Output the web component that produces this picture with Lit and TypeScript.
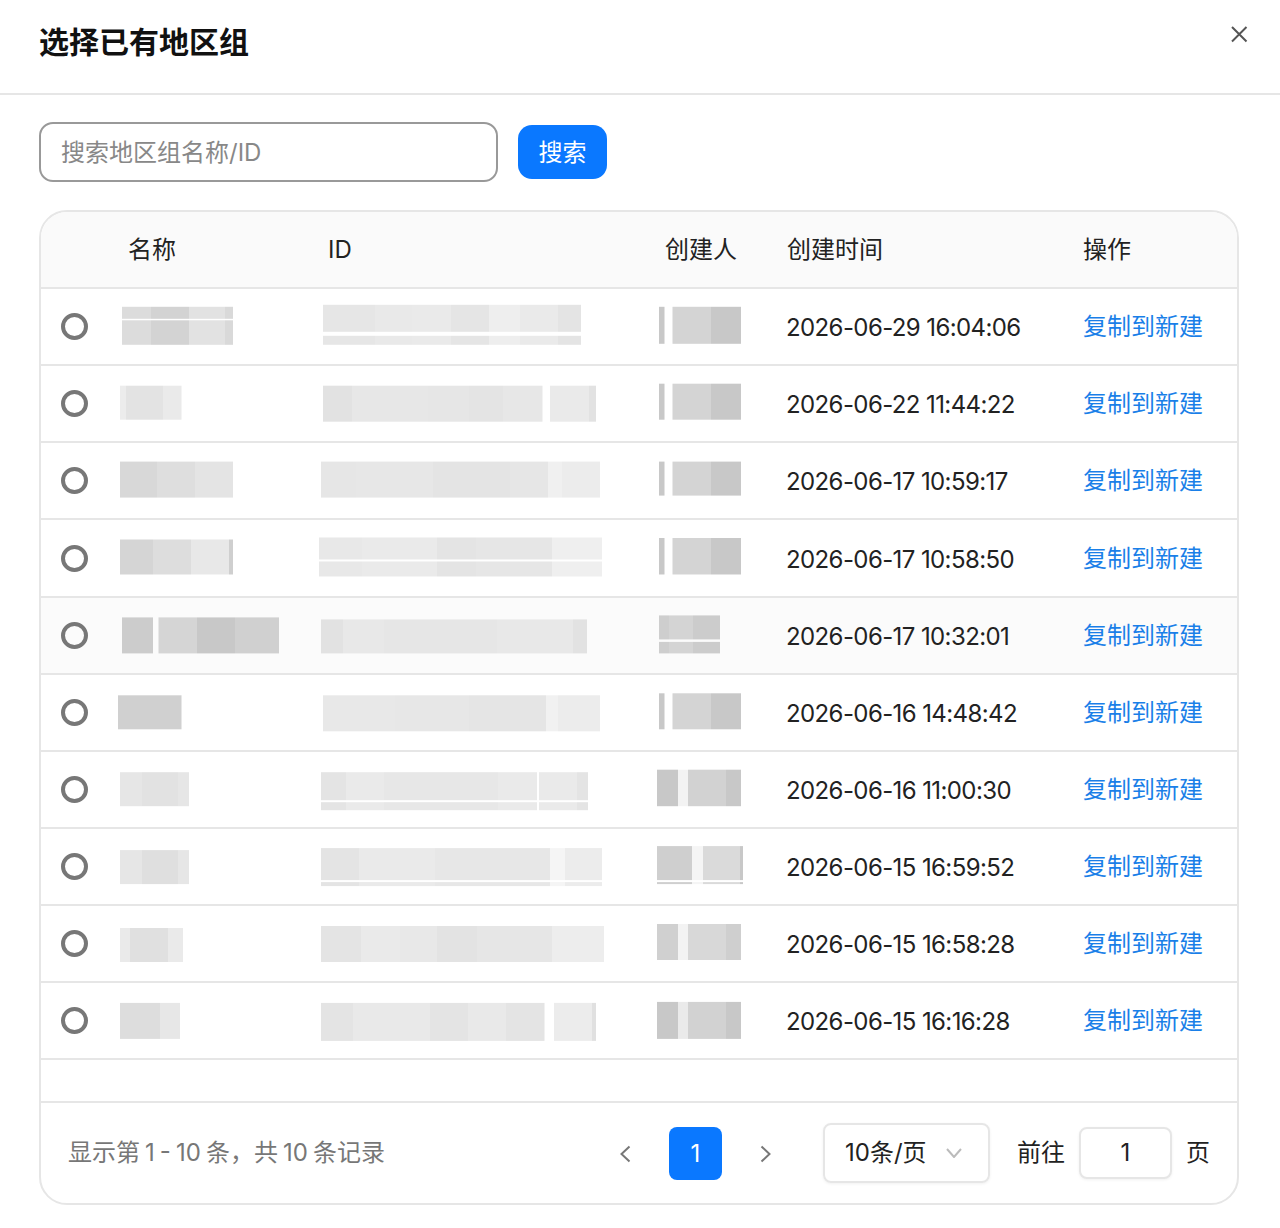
import { LitElement, html, css, svg } from 'lit';
import { customElement } from 'lit/decorators.js';

type Seg = [number, string]; // segment end x, grey
interface Block {
  x: number;
  // vertical bands of the redaction, in page y
  bands: [number, number][];
  segs: Seg[];
}

const ROW_TOP = 289.2;
const ROW_H = 77.1;

const g = (v: string) => `#${v}${v}${v}`;
const b = (x: number, bands: [number, number][], segs: [number, string][]): Block => ({
  x,
  bands,
  segs: segs.map(([e, c]) => [e, c === '' ? '' : g(c)] as Seg),
});

// bar + two-tone block used by most creator cells
const creatorA = (y0: number, y1: number) =>
  b(659, [[y0, y1]], [[664.5, 'c8'], [672.5, ''], [711, 'd4'], [741, 'c8']]);

const rows = [
  {
    time: '2026-06-29 16:04:06',
    name: b(122, [[307, 319], [320.5, 345]], [[151, 'dc'], [189, 'd3'], [225, 'e2'], [233, 'd9']]),
    id: b(323, [[305, 332], [336, 345]], [[375, 'e6'], [412, 'e9'], [451, 'ea'], [489, 'e5'], [520, 'ee'], [558, 'ea'], [581, 'e4']]),
    creator: creatorA(307, 344),
  },
  {
    time: '2026-06-22 11:44:22',
    name: b(120, [[386, 420]], [[126, 'ec'], [163, 'e3'], [181.5, 'ea']]),
    id: b(323, [[386, 422]], [[352, 'e2'], [428, 'e7'], [469, 'e6'], [503, 'e4'], [542.5, 'e7'], [550, ''], [589, 'ea'], [596, 'e2']]),
    creator: creatorA(384, 420),
  },
  {
    time: '2026-06-17 10:59:17',
    name: b(120, [[462, 498]], [[157, 'd8'], [195, 'de'], [233, 'e4']]),
    id: b(321, [[462, 498]], [[356, 'e6'], [433, 'e7'], [510, 'e4'], [548, 'e6'], [562, 'f0'], [600, 'ec']]),
    creator: creatorA(462, 496),
  },
  {
    time: '2026-06-17 10:58:50',
    name: b(120, [[540, 575]], [[153, 'd5'], [191, 'dd'], [229, 'e8'], [233, 'cf']]),
    id: b(319, [[538, 560], [562, 577]], [[362, 'e8'], [437, 'ea'], [476, 'e4'], [552, 'e6'], [602, 'ef']]),
    creator: creatorA(538.5, 575),
  },
  {
    time: '2026-06-17 10:32:01',
    hover: true,
    name: b(122, [[617, 653]], [[153, 'cc'], [158.5, ''], [197, 'd5'], [235, 'c8'], [279, 'd0']]),
    id: b(321, [[619, 653]], [[343, 'e2'], [384, 'e8'], [497, 'e6'], [573, 'e8'], [587, 'e2']]),
    creator: b(659, [[615, 639], [641.5, 653]], [[669, 'ce'], [693, 'd4'], [720, 'cc']]),
  },
  {
    time: '2026-06-16 14:48:42',
    name: b(118, [[695, 729]], [[181.5, 'd0']]),
    id: b(323, [[695, 731]], [[395, 'e8'], [469, 'e7'], [546, 'e5'], [558, 'f1'], [600, 'ec']]),
    creator: creatorA(693, 729),
  },
  {
    time: '2026-06-16 11:00:30',
    name: b(120, [[772, 806]], [[142, 'e6'], [178, 'e2'], [189, 'e6']]),
    id: b(321, [[772, 800], [802, 810]], [[346, 'e4'], [384, 'ea'], [498, 'e7'], [537, 'ea'], [539, ''], [577, 'ea'], [588, 'e4']]),
    creator: b(657, [[769.5, 806]], [[678, 'c8'], [688, 'f3'], [726, 'd2'], [741, 'c8']]),
  },
  {
    time: '2026-06-15 16:59:52',
    name: b(120, [[850, 884]], [[142, 'e6'], [178, 'df'], [189, 'e6']]),
    id: b(321, [[848, 880], [882, 886]], [[359, 'e4'], [435, 'ea'], [550, 'e7'], [565, 'f5'], [602, 'ec']]),
    creator: b(657, [[846, 880], [882, 884]], [[692, 'cf'], [703, 'f5'], [740, 'da'], [743, 'c8']]),
  },
  {
    time: '2026-06-15 16:58:28',
    name: b(120, [[928, 962]], [[130, 'ea'], [168, 'e0'], [183, 'ea']]),
    id: b(321, [[926, 962]], [[361, 'e4'], [400, 'ea'], [437, 'e8'], [477, 'e3'], [552, 'e6'], [604, 'ed']]),
    creator: b(657, [[924, 960]], [[678, 'd0'], [688, 'f3'], [726, 'd8'], [741, 'cf']]),
  },
  {
    time: '2026-06-15 16:16:28',
    name: b(120, [[1003, 1039]], [[160, 'dd'], [180, 'e7']]),
    id: b(321, [[1003, 1041]], [[353, 'e4'], [430, 'e9'], [468, 'e4'], [506, 'e9'], [544.5, 'e4'], [554, ''], [592, 'ec'], [596, 'e0']]),
    creator: b(657, [[1002, 1039]], [[678, 'c8'], [688, 'ea'], [726, 'd2'], [741, 'c8']]),
  },
];

const COL_NAME = { x: 118, w: 201 };
const COL_ID = { x: 319, w: 338 };
const COL_CREATOR = { x: 657, w: 129 };

@customElement('app-root')
export class AppRoot extends LitElement {
  static styles = css`
    :host {
      display: block;
      width: 1280px;
      height: 1228px;
      background: #fff;
      overflow: hidden;
      font-family: Inter, 'Noto Sans CJK SC', sans-serif;
      font-size: 24px;
      color: #222;
    }
    * { box-sizing: border-box; }

    .cjk { padding-bottom: 4px; }

    .head {
      height: 95px;
      padding: 22px 32px 0 39px;
      display: flex;
      justify-content: space-between;
      align-items: flex-start;
      border-bottom: 2px solid #e6e6e6;
    }
    .title {
      font-size: 30px;
      font-weight: 700;
      line-height: 40px;
      color: #111;
    }
    .close { display: block; margin-top: 3px; }

    .toolbar {
      display: flex;
      align-items: center;
      gap: 20px;
      padding: 27px 39px 0;
    }
    .search {
      width: 459px;
      height: 60px;
      padding: 0 20px;
      border: 2px solid #999;
      border-radius: 14px;
      font: inherit;
      color: #222;
      outline: none;
      background: #fff;
    }
    .search::placeholder { color: #888; }
    .btn {
      width: 89px;
      height: 54px;
      padding-bottom: 4px;
      display: flex;
      align-items: center;
      justify-content: center;
      background: #0a78ff;
      color: #fff;
      border-radius: 14px;
    }

    .table {
      width: 1200px;
      margin: 28px 0 0 39px;
      border: 2px solid #e6e6e6;
      border-radius: 28px;
      overflow: hidden;
    }
    .row {
      display: grid;
      grid-template-columns: 77px 201px 338px 129px 297px 154px;
      align-items: stretch;
      height: 77.1px;
      border-bottom: 2px solid #e6e6e6;
    }
    .row.thead {
      height: 77.2px;
      background: #fafafa;
      color: #222;
    }
    .row.hover { background: #fbfbfb; }
    .cell {
      display: flex;
      align-items: center;
      min-width: 0;
    }
    .thead .cell { padding-bottom: 5px; }
    .thead .cell.name-h { padding-left: 10px; }
    .thead .cell.id-h { padding: 0 0 1px 9px; }
    .thead .cell.creator-h { padding-left: 8px; }
    .thead .cell.time-h { padding-left: 1px; }
    .radio {
      width: 27px;
      height: 27px;
      margin-left: 20px;
      border: 4px solid #777;
      border-radius: 50%;
    }
    .redact { display: block; width: 100%; height: 100%; }
    .time { letter-spacing: -0.6px; padding-top: 2px; }
    .link { color: #1a7fe8; padding-bottom: 4px; }

    .spacer {
      height: 42.8px;
      border-bottom: 2px solid #e6e6e6;
    }
    .foot {
      height: 100px;
      display: flex;
      align-items: center;
      padding: 0 27px;
    }
    .total {
      color: #777;
      margin-right: auto;
      padding-bottom: 4px;
      word-spacing: -1.7px;
    }
    .pager {
      display: flex;
      align-items: center;
      gap: 17px;
      margin: 2px 30px 0 0;
    }
    .nav {
      width: 54px;
      height: 54px;
      display: flex;
      align-items: center;
      justify-content: center;
    }
    .page {
      width: 53px;
      height: 53px;
      display: flex;
      align-items: center;
      justify-content: center;
      background: #0a78ff;
      color: #fff;
      border-radius: 8px;
    }
    .size {
      width: 167px;
      height: 60px;
      padding: 0 26px 0 20px;
      display: flex;
      align-items: center;
      justify-content: space-between;
      border: 2px solid #e6e6e6;
      border-radius: 8px;
      box-shadow: 0 1px 3px rgba(0, 0, 0, 0.06);
      color: #222;
      margin-right: 27px;
    }
    .goto { display: flex; align-items: center; }
    .goto-input {
      width: 93px;
      height: 52px;
      margin: 0 14px;
      border: 2px solid #e6e6e6;
      border-radius: 8px;
      box-shadow: 0 1px 3px rgba(0, 0, 0, 0.06);
      font: inherit;
      color: #222;
      text-align: center;
      outline: none;
      background: #fff;
    }
  `;

  private redact(block: Block, col: { x: number; w: number }, i: number) {
    const top = ROW_TOP + i * ROW_H;
    let start = block.x;
    const parts = block.segs.map(([end, fill]) => {
      const x = start;
      start = end;
      if (!fill) return null;
      return block.bands.map(
        ([y0, y1]) =>
          svg`<rect x=${x} y=${y0} width=${end - x} height=${y1 - y0} fill=${fill}></rect>`,
      );
    });
    return html`<svg class="redact" viewBox="${col.x} ${top} ${col.w} 75.1" preserveAspectRatio="none">${parts}</svg>`;
  }

  render() {
    return html`
      <div class="head">
        <div class="title">选择已有地区组</div>
        <svg class="close" width="18" height="18" viewBox="0 0 18 18">
          <path d="M2 2l14.5 14.5M16.5 2L2 16.5" stroke="#555" stroke-width="2" fill="none"></path>
        </svg>
      </div>

      <div class="toolbar">
        <input class="search" placeholder="搜索地区组名称/ID" />
        <div class="btn">搜索</div>
      </div>

      <div class="table">
        <div class="row thead">
          <div class="cell"></div>
          <div class="cell name-h">名称</div>
          <div class="cell id-h">ID</div>
          <div class="cell creator-h">创建人</div>
          <div class="cell time-h">创建时间</div>
          <div class="cell">操作</div>
        </div>
        ${rows.map(
          (r, i) => html`
            <div class="row ${r.hover ? 'hover' : ''}">
              <div class="cell"><span class="radio"></span></div>
              <div class="cell">${this.redact(r.name, COL_NAME, i)}</div>
              <div class="cell">${this.redact(r.id, COL_ID, i)}</div>
              <div class="cell">${this.redact(r.creator, COL_CREATOR, i)}</div>
              <div class="cell time">${r.time}</div>
              <div class="cell link">复制到新建</div>
            </div>
          `,
        )}
        <div class="spacer"></div>
        <div class="foot">
          <div class="total">显示第 1 - 10 条，共 10 条记录</div>
          <div class="pager">
            <div class="nav">
              <svg width="12" height="18" viewBox="0 0 12 18">
                <path d="M10.5 1.5L2.5 9l8 7.5" stroke="#777" stroke-width="2" fill="none"></path>
              </svg>
            </div>
            <div class="page">1</div>
            <div class="nav">
              <svg width="12" height="18" viewBox="0 0 12 18">
                <path d="M1.5 1.5L9.5 9l-8 7.5" stroke="#777" stroke-width="2" fill="none"></path>
              </svg>
            </div>
          </div>
          <div class="size">
            <span class="cjk">10条/页</span>
            <svg width="16" height="10" viewBox="0 0 16 10">
              <path d="M1 1l7 8 7-8" stroke="#bbb" stroke-width="2" fill="none"></path>
            </svg>
          </div>
          <div class="goto">
            <span class="cjk">前往</span>
            <input class="goto-input" value="1" />
            <span class="cjk">页</span>
          </div>
        </div>
      </div>
    `;
  }
}
